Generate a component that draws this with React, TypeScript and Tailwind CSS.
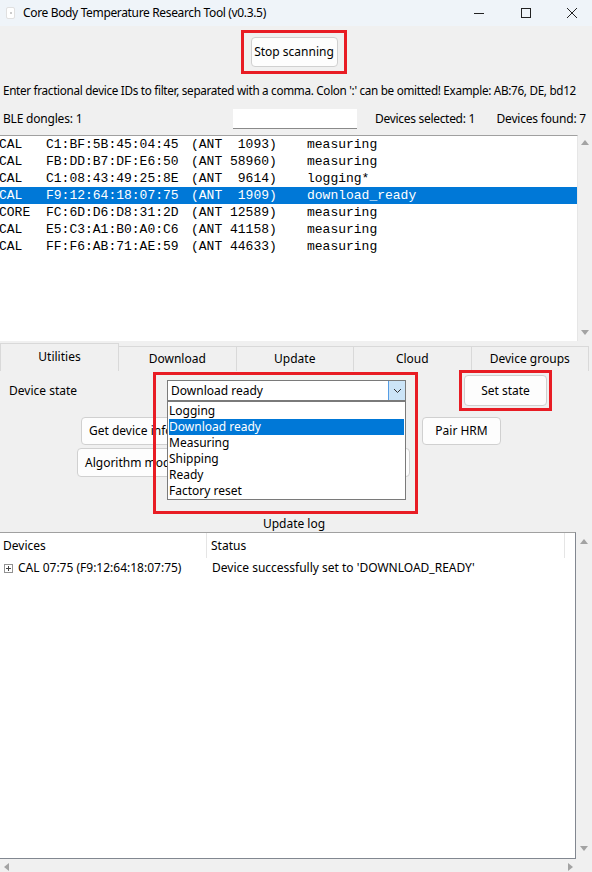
import React from 'react';

const rows = [
  { kind: 'CAL', addr: 'C1:BF:5B:45:04:45', ant: '(ANT  1093)', state: 'measuring' },
  { kind: 'CAL', addr: 'FB:DD:B7:DF:E6:50', ant: '(ANT 58960)', state: 'measuring' },
  { kind: 'CAL', addr: 'C1:08:43:49:25:8E', ant: '(ANT  9614)', state: 'logging*' },
  { kind: 'CAL', addr: 'F9:12:64:18:07:75', ant: '(ANT  1909)', state: 'download_ready', selected: true },
  { kind: 'CORE', addr: 'FC:6D:D6:D8:31:2D', ant: '(ANT 12589)', state: 'measuring' },
  { kind: 'CAL', addr: 'E5:C3:A1:B0:A0:C6', ant: '(ANT 41158)', state: 'measuring' },
  { kind: 'CAL', addr: 'FF:F6:AB:71:AE:59', ant: '(ANT 44633)', state: 'measuring' },
];

const states = ['Logging', 'Download ready', 'Measuring', 'Shipping', 'Ready', 'Factory reset'];

const tabs = ['Utilities', 'Download', 'Update', 'Cloud', 'Device groups'];

const Arrow: React.FC<{ dir: 'up' | 'down' | 'left' | 'right' }> = ({ dir }) => {
  const pts = {
    up: '0,6 4,1 8,6',
    down: '0,1 4,6 8,1',
    left: '6,0 1,4 6,8',
    right: '1,0 6,4 1,8',
  }[dir];
  return (
    <svg width="8" height="8" viewBox="0 0 8 8">
      <polygon points={pts} fill="#a3a3a3" />
    </svg>
  );
};

const Btn: React.FC<{ className?: string; children: React.ReactNode }> = ({ className = '', children }) => (
  <div
    className={`bg-[#fdfdfd] border border-[#d0d0d0] rounded-[4px] flex items-center text-[12px] text-black ${className}`}
  >
    {children}
  </div>
);

export default function App() {
  return (
    <div
      className="w-[592px] h-[872px] bg-[#f0f0f0] overflow-hidden relative text-[12px] text-black"
      style={{ fontFamily: '"Noto Sans", "Liberation Sans", sans-serif' }}
    >
      {/* title bar */}
      <div className="h-[26px] bg-[#eff4f9] flex items-center">
        <div className="ml-[6px] w-[9px] h-[12px] rounded-[2px] bg-white border border-[#e0e0e0] flex items-center justify-center">
          <div className="w-[2px] h-[2px] bg-[#bbb] rounded-full" />
        </div>
        <span className="ml-[8px] text-[12px] tracking-[-0.35px]">Core Body Temperature Research Tool (v0.3.5)</span>
        <div className="ml-auto flex items-center">
          <svg width="12" height="12" viewBox="0 0 12 12" className="mr-[35px]">
            <line x1="1" y1="6.5" x2="11" y2="6.5" stroke="#222" strokeWidth="1" />
          </svg>
          <svg width="12" height="12" viewBox="0 0 12 12" className="mr-[34px]">
            <rect x="1.5" y="1.5" width="9" height="9" fill="none" stroke="#222" strokeWidth="1" />
          </svg>
          <svg width="12" height="12" viewBox="0 0 12 12" className="mr-[14px]">
            <path d="M1 1 L11 11 M11 1 L1 11" stroke="#222" strokeWidth="1" />
          </svg>
        </div>
      </div>

      {/* stop scanning */}
      <div className="mt-[4px] ml-[241px] w-[106px] h-[44px] border-[3px] border-[#e81c24] flex items-center justify-center">
        <Btn className="w-[87px] h-[30px] justify-center">Stop scanning</Btn>
      </div>

      <div className="mt-[8px] h-[16px] leading-[16px] pl-[3px] whitespace-nowrap text-[11.7px] tracking-[-0.3px]">
        Enter fractional device IDs to filter, separated with a comma. Colon ':' can be omitted! Example: AB:76, DE, bd12
      </div>

      <div className="mt-[11px] h-[20px] flex items-center">
        <span className="pl-[3px] w-[233px] tracking-[-0.2px]">BLE dongles: 1</span>
        <div className="w-[124px] h-[20px] bg-white border-b border-[#8a8a8a]" />
        <span className="ml-[18px] tracking-[-0.3px]">Devices selected: 1</span>
        <span className="ml-auto mr-[6px] tracking-[-0.2px]">Devices found: 7</span>
      </div>

      {/* device list */}
      <div className="mt-[6px] h-[206px] flex">
        <div className="w-[578px] bg-white border-t border-[#a0a0a0] border-r border-r-[#e6e6e6] overflow-hidden">
          {rows.map((r) => (
            <div
              key={r.addr}
              className={`h-[17px] leading-[17px] flex whitespace-pre text-[13px] w-[577px] ${
                r.selected ? 'bg-[#0078d7] text-white' : 'text-black'
              }`}
              style={{ fontFamily: '"Liberation Mono", "DejaVu Sans Mono", monospace' }}
            >
              <span className="w-[46px] -ml-[1px] shrink-0">{r.kind}</span>
              <span className="w-[145px] ml-[1px] shrink-0">{r.addr}</span>
              <span className="w-[116px] shrink-0">{r.ant}</span>
              <span>{r.state}</span>
            </div>
          ))}
        </div>
        <div className="flex-1 flex flex-col items-center justify-between py-[4px] bg-[#f0f0f0]">
          <Arrow dir="up" />
          <Arrow dir="down" />
        </div>
      </div>

      {/* tabs */}
      <div className="h-[29px] flex items-end mt-[1px]">
        {tabs.map((t, i) => (
          <div
            key={t}
            className={`flex items-center justify-center border border-b-0 border-[#d9d9d9] ${
              i === 0 ? 'w-[119px] h-[28px] bg-[#f0f0f0] pb-[2px]' : 'w-[118.5px] h-[25px] bg-[#f0f0f0] -ml-px'
            }`}
          >
            {t}
          </div>
        ))}
      </div>

      {/* utilities panel */}
      <div className="relative h-[144px]">
        <div className="flex items-start">
          <span className="ml-[9px] w-[158px] mt-[12px] leading-[16px]">Device state</span>
          <div className="mt-[9px] w-[239px] h-[21px] bg-white border border-[#7a7a7a] flex">
            <span className="flex-1 pl-[3px] leading-[19px]">Download ready</span>
            <div className="w-[17px] h-[19px] bg-[#cce4f7] border-l border-[#569de5] flex items-center justify-center">
              <svg width="9" height="6" viewBox="0 0 9 6">
                <path d="M1 1 L4.5 4.5 L8 1" fill="none" stroke="#333" strokeWidth="1" />
              </svg>
            </div>
          </div>
          <div className="ml-[53px] -mt-[1px] w-[93px] h-[41px] border-[3px] border-[#e81c24] flex items-center justify-center">
            <Btn className="w-[83px] h-[31px] justify-center">Set state</Btn>
          </div>
        </div>

        <div className="mt-[6px] flex">
          <Btn className="ml-[81px] w-[110px] h-[28px] pl-[7px]">Get device info</Btn>
          <Btn className="ml-[231px] w-[79px] h-[28px] justify-center">Pair HRM</Btn>
        </div>

        <div className="mt-[3px] flex">
          <Btn className="ml-[77px] w-[333px] h-[29px] pl-[7px]">Algorithm mode</Btn>
        </div>

        {/* open dropdown */}
        <div className="absolute left-[167px] top-[30px] w-[239px] h-[99px] bg-white border border-[#7a7a7a] pt-[1px] px-[1px]">
          {states.map((s) => (
            <div
              key={s}
              className={`h-[16px] leading-[16px] ${s === 'Download ready' ? 'bg-[#0078d7] text-white' : ''}`}
            >
              {s}
            </div>
          ))}
        </div>
        <div className="absolute left-[153px] top-[1px] w-[265px] h-[142px] border-[3px] border-[#e81c24] pointer-events-none" />
      </div>

      <div className="h-[17px] leading-[17px] text-center -ml-[4px]">Update log</div>

      {/* update log table */}
      <div className="flex h-[327px]">
        <div className="w-[576px] bg-white border-r border-b border-[#828790] border-t border-t-[#a0a0a0] flex">
          <div className="flex-1">
            <div className="h-[25px] flex items-center">
              <span className="w-[207px] pl-[3px] h-[25px] leading-[25px] border-r border-[#e5e5e5]">Devices</span>
              <span className="pl-[4px] flex-1 h-[25px] leading-[25px] border-r border-[#e5e5e5]">Status</span>
              <span className="w-[10px]" />
            </div>
            <div className="h-[20px] flex items-center">
              <div className="w-[207px] flex items-center pl-[4px]">
                <svg width="9" height="9" viewBox="0 0 9 9">
                  <rect x="0.5" y="0.5" width="8" height="8" fill="white" stroke="#919191" />
                  <path d="M2 4.5 H7 M4.5 2 V7" stroke="#444" />
                </svg>
                <span className="ml-[5px]">CAL 07:75 (F9:12:64:18:07:75)</span>
              </div>
              <span className="pl-[5px]">Device successfully set to 'DOWNLOAD_READY'</span>
            </div>
          </div>
        </div>
        <div className="flex-1 flex flex-col items-center justify-between pt-[6px] pb-[6px]">
          <Arrow dir="up" />
          <Arrow dir="down" />
        </div>
      </div>
      <div className="h-[15px] w-[575px] flex items-center justify-between pl-[3px]">
        <Arrow dir="left" />
        <Arrow dir="right" />
      </div>
    </div>
  );
}
